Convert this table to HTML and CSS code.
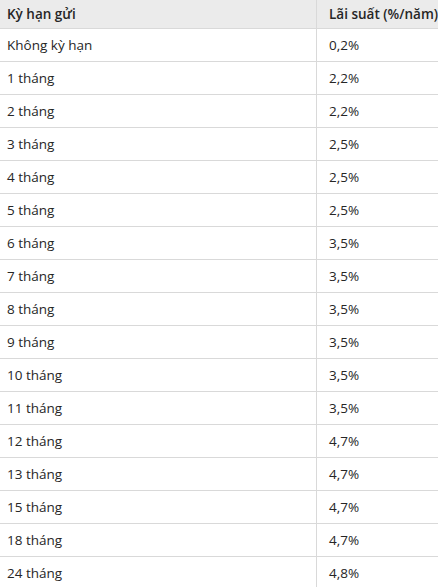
FILE: index.html
```html
<!DOCTYPE html>
<html lang="vi">
<head>
<meta charset="utf-8">
<link rel="stylesheet" href="styles.css">
</head>
<body>
<table class="rates">
  <thead>
    <tr><th>Kỳ hạn gửi</th><th>Lãi suất (%/năm)</th></tr>
  </thead>
  <tbody>
    <tr><td>Không kỳ hạn</td><td>0,2%</td></tr>
    <tr><td>1 tháng</td><td>2,2%</td></tr>
    <tr><td>2 tháng</td><td>2,2%</td></tr>
    <tr><td>3 tháng</td><td>2,5%</td></tr>
    <tr><td>4 tháng</td><td>2,5%</td></tr>
    <tr><td>5 tháng</td><td>2,5%</td></tr>
    <tr><td>6 tháng</td><td>3,5%</td></tr>
    <tr><td>7 tháng</td><td>3,5%</td></tr>
    <tr><td>8 tháng</td><td>3,5%</td></tr>
    <tr><td>9 tháng</td><td>3,5%</td></tr>
    <tr><td>10 tháng</td><td>3,5%</td></tr>
    <tr><td>11 tháng</td><td>3,5%</td></tr>
    <tr><td>12 tháng</td><td>4,7%</td></tr>
    <tr><td>13 tháng</td><td>4,7%</td></tr>
    <tr><td>15 tháng</td><td>4,7%</td></tr>
    <tr><td>18 tháng</td><td>4,7%</td></tr>
    <tr><td>24 tháng</td><td>4,8%</td></tr>
  </tbody>
</table>
</body>
</html>
```
FILE: styles.css
```css
html, body {
  margin: 0;
  padding: 0;
  background: #fff;
  overflow: hidden;
}
.rates {
  border-collapse: collapse;
  width: 438px;
  table-layout: fixed;
  font-family: "Open Sans", "Noto Sans", sans-serif;
  font-size: 13.5px;
  color: #262626;
}
.rates th, .rates td {
  text-align: left;
  padding: 0 0 0 12px;
  white-space: nowrap;
  overflow: visible;
  border-bottom: 1px solid #d9d9d9;
}
.rates th:first-child, .rates td:first-child {
  width: 297px;
  padding: 0 12px 0 7px;
  border-right: 1px solid #d9d9d9;
}
.rates th {
  height: 28px;
  background: #ebebeb;
  font-weight: 600;
}
.rates td {
  height: 32px;
  font-weight: 400;
}
```
